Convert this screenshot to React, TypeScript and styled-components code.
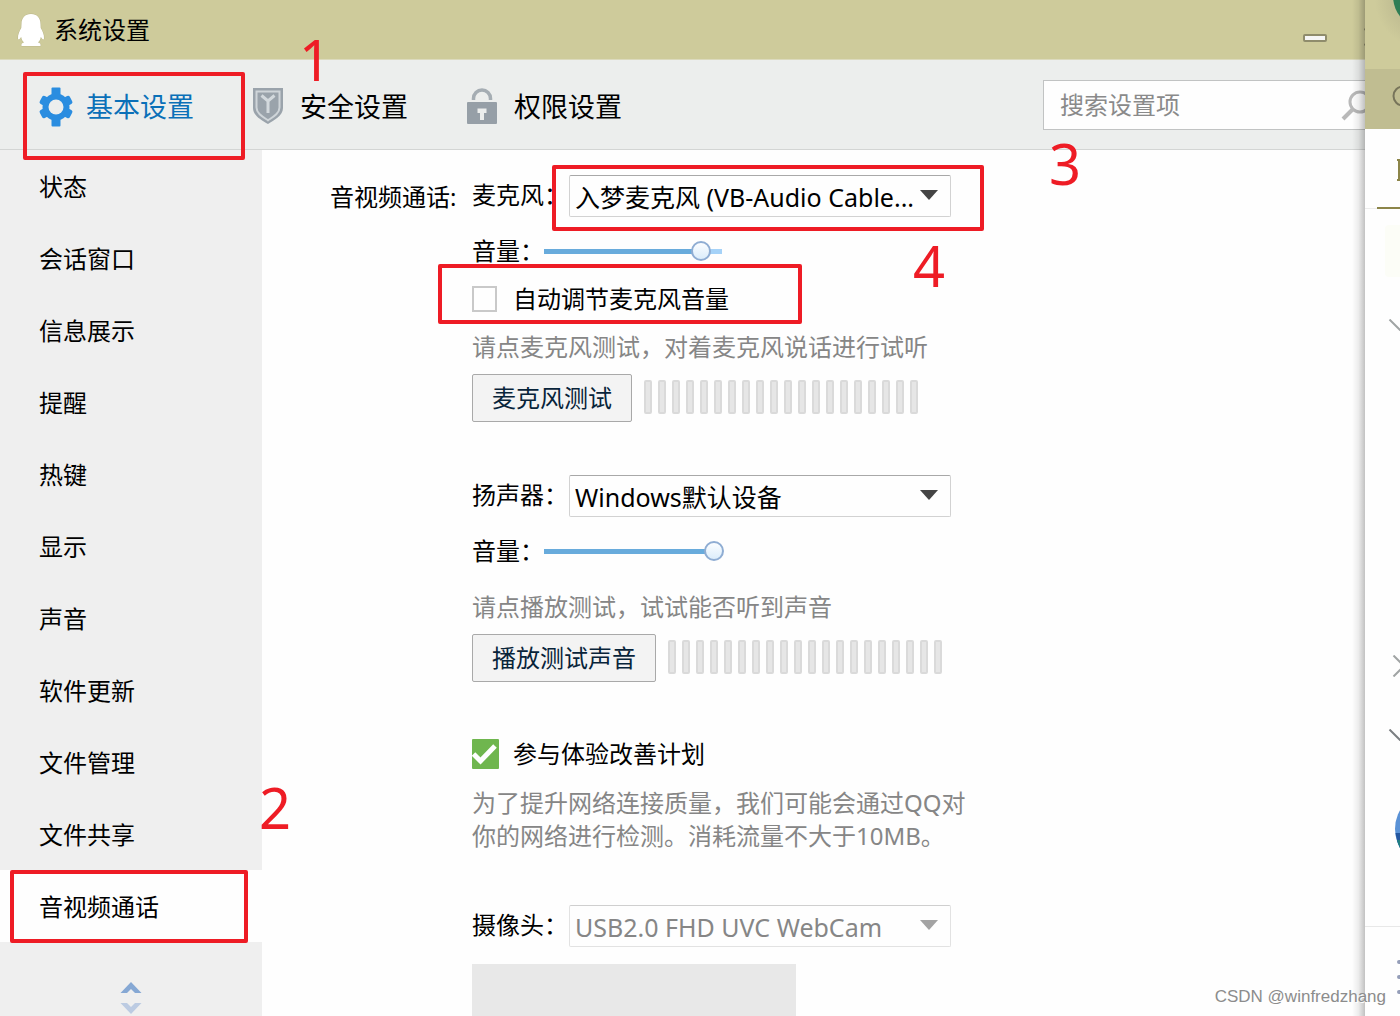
import React, { useState } from "react";
import styled, { createGlobalStyle, css } from "styled-components";

const GlobalStyle = createGlobalStyle`
  *, *::before, *::after { box-sizing: border-box; }
  body {
    margin: 0;
    overflow: hidden;
    background: #fefefe;
    color: #000;
    font-family: "Noto Sans", "Noto Sans CJK SC", sans-serif;
    font-size: 24px;
    line-height: 36px;
  }
  button, input, select { font: inherit; color: inherit; margin: 0; }
`;

const Desktop = styled.div`
  position: relative;
  height: 100vh;
  overflow: hidden;
`;

const SettingsWindow = styled.div`
  display: flex;
  flex-direction: column;
  height: 100%;
  background: #fefefe;
`;

const TitleBar = styled.header`
  display: flex;
  align-items: center;
  flex: none;
  height: 60px;
  padding-left: 16px;
  background: #cecb9b;
  border-bottom: 1px solid #dcdabd;
`;

const Title = styled.h1`
  flex: 1;
  margin: 0 0 0 8px;
  font-size: 24px;
  font-weight: 400;
`;

const WindowButton = styled.button`
  display: flex;
  width: 24px;
  height: 24px;
  margin: 16px 0 0 37px;
  padding: 0;
  border: 0;
  background: none;
`;

const WindowButtons = styled.div`
  display: flex;
  margin-right: 12px;
`;

const Toolbar = styled.div`
  display: flex;
  align-items: center;
  flex: none;
  height: 90px;
  padding: 0 16px 0 38px;
  background: #eceeed;
  border-bottom: 1px solid #d3d5d4;
`;

const Tabs = styled.nav`
  display: flex;
  flex: 1;
`;

const Tab = styled.button<{ $active?: boolean }>`
  display: flex;
  align-items: center;
  gap: 12px;
  width: 214px;
  padding: 4px 0 0;
  border: 0;
  background: none;
  font-size: 27px;
  line-height: 40px;
  color: ${(p) => (p.$active ? "#0a70b8" : "#000")};
`;

const SearchBox = styled.div`
  display: flex;
  align-items: center;
  width: 341px;
  height: 50px;
  padding: 0 12px 0 16px;
  border: 1px solid #c1c3c3;
  background: #fefefe;
`;

const SearchInput = styled.input`
  flex: 1;
  min-width: 0;
  padding: 0;
  border: 0;
  outline: 0;
  background: none;
  &::placeholder { color: #8a8a8a; opacity: 1; }
`;

const Body = styled.div`
  display: flex;
  flex: 1;
  min-height: 0;
`;

const Sidebar = styled.aside`
  display: flex;
  flex-direction: column;
  flex: none;
  width: 262px;
  background: #efefef;
`;

const SideItem = styled.button<{ $active?: boolean }>`
  flex: none;
  height: 72px;
  padding: 2px 0 0 39px;
  border: 0;
  text-align: left;
  background: ${(p) => (p.$active ? "#fefefe" : "transparent")};
`;

const Scroller = styled.div`
  display: flex;
  flex-direction: column;
  align-items: center;
  gap: 10px;
  padding-top: 40px;
`;

const ScrollButton = styled.button`
  display: flex;
  padding: 0;
  border: 0;
  background: none;
`;

const Main = styled.main`
  display: grid;
  grid-template-columns: 142px minmax(0, 1fr);
  flex: 1;
  min-width: 0;
  padding: 25px 0 0 68px;
  overflow: hidden;
`;

const SectionTitle = styled.h2`
  margin: 4px 0 0;
  font-size: 24px;
  font-weight: 400;
`;

const Group = styled.section<{ $gap?: number }>`
  margin-bottom: ${(p) => p.$gap ?? 53}px;
`;

const Row = styled.div`
  display: flex;
  align-items: center;
`;

const FieldLabel = styled.label`
  width: 97px;
  padding-bottom: 2px;
  white-space: nowrap;
`;

const SelectWrap = styled.div`
  position: relative;
  width: 382px;
`;

const SelectArrow = styled.svg`
  position: absolute;
  top: 15px;
  right: 13px;
  pointer-events: none;
`;

const Select = styled.select`
  appearance: none;
  display: block;
  width: 100%;
  height: 42px;
  padding: 2px 36px 0 5px;
  border: 1px solid #d2d2d2;
  border-top-color: #a8a8a8;
  border-radius: 2px;
  background: #fefefe;
  font-size: 25px;
  &:disabled {
    color: #868686;
    border-color: #e2e2e2;
    border-top-color: #cfcfcf;
    opacity: 1;
  }
`;

const VolumeRow = styled(Row)`
  height: 48px;
  margin-top: 10px;
`;

const Slider = styled.input<{ $fill: number }>`
  appearance: none;
  width: 180px;
  height: 20px;
  background: linear-gradient(
      to right,
      #68abdc ${(p) => p.$fill}%,
      #a5d2f8 ${(p) => p.$fill}%
    )
    0 50% / 178px 5px no-repeat;
  &::-webkit-slider-thumb {
    appearance: none;
    width: 20px;
    height: 20px;
    border: 2px solid #8fadd3;
    border-radius: 50%;
    background: linear-gradient(#fbfdff, #dcedfb);
  }
`;

const CheckRow = styled.label`
  display: flex;
  align-items: center;
  gap: 14px;
  height: 48px;
`;

const CheckSlot = styled.span`
  position: relative;
  display: flex;
  width: 27px;
`;

const Checkbox = styled.input`
  appearance: none;
  width: 25px;
  height: 26px;
  border: 2px solid #c9c9c9;
  background: #fefefe;
  &:checked {
    width: 27px;
    height: 30px;
    border: 0;
    border-radius: 1px;
    background: #6fb64e;
  }
`;

const CheckMark = styled.svg`
  position: absolute;
  inset: 0;
  pointer-events: none;
`;

const Hint = styled.p<{ $spaced?: boolean }>`
  margin: 0;
  line-height: 48px;
  color: #868686;
  ${(p) => p.$spaced && css`margin-top: 8px;`}
`;

const Note = styled.p`
  max-width: 510px;
  margin: 8px 0 0;
  line-height: 33px;
  color: #868686;
`;

const TestRow = styled(Row)`
  gap: 12px;
  margin-top: 3px;
`;

const TestButton = styled.button`
  height: 48px;
  padding: 0 19px;
  border: 1px solid #a9a9a9;
  border-radius: 2px;
  background: #f3f3f3;
  color: #08243a;
`;

const Meter = styled.div`
  display: flex;
  gap: 6px;
  padding-bottom: 2px;
`;

const MeterBar = styled.span`
  width: 8px;
  height: 34px;
  border: 2px solid #dadada;
  border-radius: 2px;
  background: #e6e6e6;
`;

const Preview = styled.div`
  width: 324px;
  height: 240px;
  margin-top: 17px;
  background: #e8e8e8;
`;

const ContactsWindow = styled.aside`
  position: absolute;
  top: 0;
  right: 0;
  bottom: 0;
  display: flex;
  flex-direction: column;
  width: 35px;
  overflow: hidden;
  background: #fefefe;
`;

const WindowShadow = styled.div`
  position: absolute;
  top: 0;
  right: 35px;
  bottom: 0;
  width: 13px;
  background: linear-gradient(to right, rgba(0, 0, 0, 0), rgba(0, 0, 0, 0.07) 50%, rgba(0, 0, 0, 0.24));
`;

const ContactsHeader = styled.div`
  flex: none;
  height: 69px;
  background: radial-gradient(circle at 58px 0, #c3c094 32px, #cecb9b 48px);
`;

const ContactsSearch = styled.div`
  flex: none;
  height: 60px;
  padding: 16px 0 0 27px;
  background: #c0bd91;
`;

const ContactsTabs = styled.div`
  flex: none;
  height: 80px;
  padding: 30px 0 0 32px;
  background: linear-gradient(#8c8549, #8c8549) 12px 78px / 23px 2px no-repeat,
    linear-gradient(#ececec, #ececec) 0 79px / 12px 1px no-repeat;
`;

const ContactsList = styled.div`
  display: flex;
  flex-direction: column;
  align-items: flex-start;
  flex: 1;
  min-height: 0;
  overflow: hidden;
  padding: 16px 0 0 20px;
`;

const HighlightTile = styled.div`
  flex: none;
  width: 40px;
  height: 52px;
  margin-bottom: 42px;
  border-radius: 4px;
  background: #fcfdf7;
`;

const Glyph = styled.svg<{ $after?: number }>`
  flex: none;
  display: block;
  margin-bottom: ${(p) => p.$after ?? 0}px;
`;

const ContactsFooter = styled.div`
  flex: none;
  height: 90px;
  padding: 31px 0 0 31px;
  border-top: 1px solid #e8e8e8;
`;

const Marker = styled.div<{ $x: number; $y: number; $w: number; $h: number }>`
  position: absolute;
  left: ${(p) => p.$x}px;
  top: ${(p) => p.$y}px;
  width: ${(p) => p.$w}px;
  height: ${(p) => p.$h}px;
  border: 4px solid #ee1c25;
  border-radius: 2px;
  pointer-events: none;
`;

const Step = styled.span<{ $x: number; $y: number }>`
  position: absolute;
  left: ${(p) => p.$x}px;
  top: ${(p) => p.$y}px;
  font-size: 56px;
  line-height: 40px;
  color: #ee1c25;
  pointer-events: none;
`;

const Watermark = styled.span`
  position: absolute;
  right: 14px;
  bottom: 9px;
  font-family: "Liberation Sans", sans-serif;
  font-size: 17px;
  line-height: 20px;
  color: #8c8c8c;
  text-shadow: 1px 1px 0 #fff;
`;

const Penguin = () => (
  <svg width="30" height="36" viewBox="0 0 30 36" aria-hidden="true">
    <path
      d="M15 2C9 2 5.500 6 5.500 12L5.300 16C3.500 19 1.800 22.500 2 26.500C2.300 28.800 4 26.500 5.200 25C5.600 27.500 6.500 29 8 30.500C5.800 31.200 5 32.200 5.500 34H24.500C25 32.200 24.200 31.200 22 30.500C23.500 29 24.400 27.500 24.800 25C26 26.500 27.700 28.800 28 26.500C28.200 22.500 26.500 19 24.700 16L24.500 12C24.500 6 21 2 15 2Z"
      fill="#fff"
      stroke="#bbb78a"
      strokeWidth="1"
      paintOrder="stroke"
    />
  </svg>
);

const Gear = () => (
  <svg width="36" height="40" viewBox="0 0 36 40" aria-hidden="true">
    <g fill="#2a8de0">
      <circle cx="18" cy="20" r="13.500" />
      <rect x="13.500" y="0.500" width="9" height="39" rx="1" />
      {[62, 118].map((a) => (
        <rect key={a} x="13.500" y="3" width="9" height="34" rx="2" transform={`rotate(${a} 18 20)`} />
      ))}
    </g>
    <circle cx="18" cy="20" r="7.500" fill="#eceeed" />
  </svg>
);

const Shield = () => (
  <svg width="36" height="40" viewBox="0 0 36 40" aria-hidden="true">
    <path d="M1 1H31V21C31 29 22 33 16 37C10 33 1 29 1 21Z" fill="#9aa3ab" />
    <path d="M4.500 4.500H27.500V20.500C27.500 26.500 21 30 16 33.300C11 30 4.500 26.500 4.500 20.500Z" fill="none" stroke="#cfd5d9" strokeWidth="2" />
    <path d="M9.500 8.500L16 14L22.500 8.500M16 13.500V26" fill="none" stroke="#d3d9dd" strokeWidth="3" />
  </svg>
);

const Lock = () => (
  <svg width="36" height="40" viewBox="0 0 36 40" aria-hidden="true">
    <path d="M7.500 13V11.500A8.500 8.500 0 0 1 24.500 11.500V13" fill="none" stroke="#a5adb3" strokeWidth="3.500" />
    <rect x="1" y="15" width="30" height="22" rx="1" fill="#969fa7" />
    <path d="M11.500 21.500H20.500V26H18V33H14V26H11.500Z" fill="#eceeed" />
  </svg>
);

const Magnifier = () => (
  <svg width="30" height="34" viewBox="0 0 30 34" aria-hidden="true">
    <circle cx="19" cy="14" r="10" fill="none" stroke="#b9b9b9" strokeWidth="3" />
    <path d="M12 21L2 31" stroke="#b9b9b9" strokeWidth="4" />
  </svg>
);

const Triangle = ({ color }: { color: string }) => (
  <SelectArrow width="18" height="10" viewBox="0 0 18 10" aria-hidden="true">
    <path d="M0 0H18L9 10Z" fill={color} />
  </SelectArrow>
);

type DeviceProps = { id: string; label: string; value: string; disabled?: boolean };

const DeviceField = ({ id, label, value, disabled }: DeviceProps) => (
  <Row>
    <FieldLabel htmlFor={id}>{label}</FieldLabel>
    <SelectWrap>
      <Select id={id} disabled={disabled}>
        <option>{value}</option>
      </Select>
      <Triangle color={disabled ? "#a3a3a3" : "#444"} />
    </SelectWrap>
  </Row>
);

const VolumeField = ({ id, initial }: { id: string; initial: number }) => {
  const [value, setValue] = useState(initial);
  return (
    <VolumeRow>
      <label htmlFor={id}>音量：</label>
      <Slider
        id={id}
        type="range"
        min={0}
        max={100}
        value={value}
        $fill={value}
        onChange={(e) => setValue(Number(e.target.value))}
      />
    </VolumeRow>
  );
};

const CheckField = ({ label, initial }: { label: string; initial: boolean }) => {
  const [checked, setChecked] = useState(initial);
  return (
    <CheckRow>
      <CheckSlot>
        <Checkbox type="checkbox" checked={checked} onChange={() => setChecked(!checked)} />
        {checked && (
          <CheckMark width="27" height="30" viewBox="0 0 27 30">
            <path d="M1.500 15L8.500 22L23 7" fill="none" stroke="#fff" strokeWidth="5" />
          </CheckMark>
        )}
      </CheckSlot>
      {label}
    </CheckRow>
  );
};

const LevelTest = ({ label }: { label: string }) => (
  <TestRow>
    <TestButton type="button">{label}</TestButton>
    <Meter>
      {Array.from({ length: 20 }, (_, i) => (
        <MeterBar key={i} />
      ))}
    </Meter>
  </TestRow>
);

const sections = [
  "状态",
  "会话窗口",
  "信息展示",
  "提醒",
  "热键",
  "显示",
  "声音",
  "软件更新",
  "文件管理",
  "文件共享",
  "音视频通话",
];

export default function App() {
  return (
    <Desktop lang="zh-CN">
      <GlobalStyle />
      <SettingsWindow>
        <TitleBar>
          <Penguin />
          <Title>系统设置</Title>
          <WindowButtons>
            <WindowButton type="button" aria-label="最小化">
              <svg width="24" height="24" viewBox="0 0 24 24">
                <rect x="1" y="9" width="22" height="6" rx="1" fill="#f6f6f6" stroke="#8f8c6c" strokeWidth="2" />
              </svg>
            </WindowButton>
            <WindowButton type="button" aria-label="关闭">
              <svg width="24" height="24" viewBox="0 0 24 24">
                <path d="M1 2L19 20M19 2L1 20" stroke="#8f8c6c" strokeWidth="4" />
              </svg>
            </WindowButton>
          </WindowButtons>
        </TitleBar>

        <Toolbar>
          <Tabs>
            <Tab type="button" $active>
              <Gear />
              基本设置
            </Tab>
            <Tab type="button">
              <Shield />
              安全设置
            </Tab>
            <Tab type="button">
              <Lock />
              权限设置
            </Tab>
          </Tabs>
          <SearchBox>
            <SearchInput type="text" placeholder="搜索设置项" aria-label="搜索设置项" />
            <Magnifier />
          </SearchBox>
        </Toolbar>

        <Body>
          <Sidebar>
            {sections.map((name) => (
              <SideItem key={name} type="button" $active={name === "音视频通话"}>
                {name}
              </SideItem>
            ))}
            <Scroller>
              <ScrollButton type="button" aria-label="向上">
                <svg width="22" height="11" viewBox="0 0 22 11">
                  <path d="M0.500 11L11 0L21.500 11H15L11 7L7 11Z" fill="#86a8d4" />
                </svg>
              </ScrollButton>
              <ScrollButton type="button" aria-label="向下">
                <svg width="22" height="11" viewBox="0 0 22 11">
                  <path d="M0.500 0L11 11L21.500 0H15L11 4L7 0Z" fill="#bccbe2" />
                </svg>
              </ScrollButton>
            </Scroller>
          </Sidebar>

          <Main>
            <SectionTitle>音视频通话:</SectionTitle>
            <div>
              <Group>
                <DeviceField id="mic" label="麦克风：" value="入梦麦克风 (VB-Audio Cable..." />
                <VolumeField id="mic-volume" initial={92} />
                <CheckField label="自动调节麦克风音量" initial={false} />
                <Hint>请点麦克风测试，对着麦克风说话进行试听</Hint>
                <LevelTest label="麦克风测试" />
              </Group>
              <Group $gap={48}>
                <DeviceField id="speaker" label="扬声器：" value="Windows默认设备" />
                <VolumeField id="speaker-volume" initial={100} />
                <Hint $spaced>请点播放测试，试试能否听到声音</Hint>
                <LevelTest label="播放测试声音" />
              </Group>
              <Group>
                <CheckField label="参与体验改善计划" initial />
                <Note>
                  为了提升网络连接质量，我们可能会通过QQ对
                  <br />
                  你的网络进行检测。消耗流量不大于10MB。
                </Note>
              </Group>
              <DeviceField id="camera" label="摄像头：" value="USB2.0 FHD UVC WebCam" disabled />
              <Preview />
            </div>
          </Main>
        </Body>
      </SettingsWindow>

      <WindowShadow />
      <ContactsWindow>
        <ContactsHeader>
          <Glyph width="35" height="69" viewBox="0 0 35 69">
            <circle cx="61" cy="-4" r="33" fill="#2f7d55" />
          </Glyph>
        </ContactsHeader>
        <ContactsSearch>
          <Glyph width="24" height="24" viewBox="0 0 24 24">
            <circle cx="11" cy="11" r="9.500" fill="none" stroke="#77745a" strokeWidth="2" />
          </Glyph>
        </ContactsSearch>
        <ContactsTabs>
          <Glyph width="3" height="22" viewBox="0 0 3 22">
            <path d="M0 1H3M0 21H3M2 1V21" stroke="#8c8549" strokeWidth="2" />
          </Glyph>
        </ContactsTabs>
        <ContactsList>
          <HighlightTile />
          <Glyph width="32" height="12" viewBox="-4 0 32 12" $after={324}>
            <path d="M0.500 0.500L11.500 11.500L22.500 0.500" fill="none" stroke="#a0a4a4" strokeWidth="2" />
          </Glyph>
          <Glyph width="24" height="22" viewBox="-8 0 24 22" $after={52}>
            <path d="M0.500 0.500L11 11L0.500 21.500" fill="none" stroke="#a0a4a4" strokeWidth="2" />
          </Glyph>
          <Glyph width="32" height="12" viewBox="-4 0 32 12" $after={50}>
            <path d="M0.500 0.500L11.500 11.500L22.500 0.500" fill="none" stroke="#7b7f82" strokeWidth="2" />
          </Glyph>
          <Glyph width="90" height="76" viewBox="-10 0 90 76">
            <circle cx="38" cy="38" r="38" fill="#5a92d6" />
            <path d="M0.500 42H20V58H5.500Q1.500 51 0.500 42Z" fill="#2457a0" />
            <path d="M2 49H20V60H7Q3 54 2 49Z" fill="#1f7f80" />
          </Glyph>
        </ContactsList>
        <ContactsFooter>
          <Glyph width="30" height="38" viewBox="0 0 30 38">
            <path d="M3 4H30M3 19H30M3 34H30" stroke="#949db8" strokeWidth="4" strokeLinecap="round" />
          </Glyph>
        </ContactsFooter>
      </ContactsWindow>

      <Marker $x={23} $y={72} $w={222} $h={88} />
      <Marker $x={10} $y={870} $w={238} $h={73} />
      <Marker $x={552} $y={165} $w={432} $h={66} />
      <Marker $x={438} $y={264} $w={364} $h={60} />
      <Step $x={299} $y={39}>1</Step>
      <Step $x={259} $y={787}>2</Step>
      <Step $x={1049} $y={143}>3</Step>
      <Step $x={913} $y={245}>4</Step>
      <Watermark>CSDN @winfredzhang</Watermark>
    </Desktop>
  );
}
